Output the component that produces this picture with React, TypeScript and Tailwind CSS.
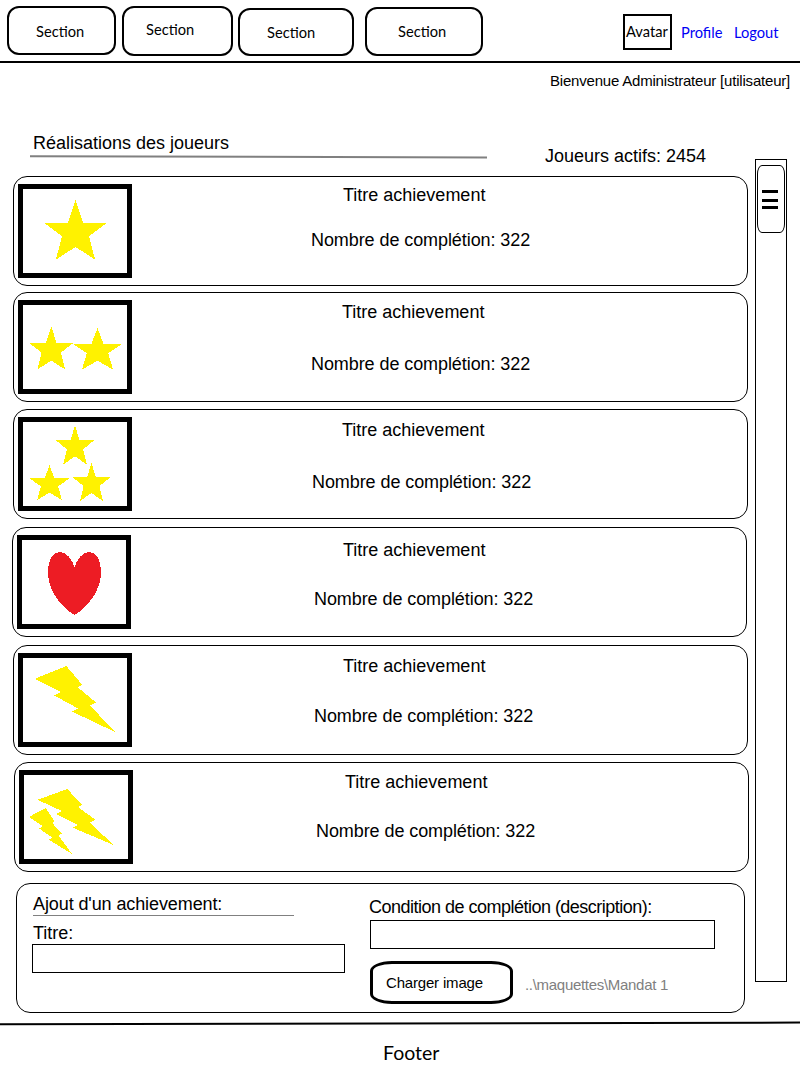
import type { ReactNode } from "react";

type Box = { x: number; y: number; w: number; h: number };

const STAR: [number, number][] = [
  [0.5, 0], [0.62, 0.38], [1, 0.38], [0.715, 0.61], [0.81, 1],
  [0.5, 0.79], [0.19, 1], [0.285, 0.61], [0, 0.38], [0.38, 0.38],
];

const BOLT: [number, number][] = [
  [0, 0.193], [0.391, 0], [0.588, 0.28], [0.538, 0.325], [0.763, 0.553], [0.688, 0.598],
  [1, 1], [0.463, 0.69], [0.538, 0.644], [0.238, 0.446], [0.325, 0.396],
];

function Shape({ points, x, y, w, h }: Box & { points: [number, number][] }) {
  return (
    <polygon
      fill="#fff200"
      points={points.map(([px, py]) => `${x + px * w},${y + py * h}`).join(" ")}
    />
  );
}

const Star = (b: Box) => <Shape points={STAR} {...b} />;
const Bolt = (b: Box) => <Shape points={BOLT} {...b} />;

type Achievement = {
  card: string;
  title: string;
  count: string;
  icon: ReactNode;
};

const achievements: Achievement[] = [
  {
    card: "ml-[13px]",
    title: "mt-[8px] ml-[211px]",
    count: "mt-[25px] ml-[179px]",
    icon: <Star x={21} y={11} w={63} h={59.5} />,
  },
  {
    card: "ml-[13px] mt-[6px]",
    title: "mt-[9px] ml-[210px]",
    count: "mt-[32px] ml-[179px]",
    icon: (
      <>
        <Star x={6} y={21.5} w={44.5} h={43} />
        <Star x={49.5} y={23} w={50} h={41.5} />
      </>
    ),
  },
  {
    card: "ml-[13px] mt-[7px]",
    title: "mt-[10px] ml-[210px]",
    count: "mt-[32px] ml-[180px]",
    icon: (
      <>
        <Star x={33} y={3.5} w={38} h={39} />
        <Star x={6.5} y={43} w={40} h={35} />
        <Star x={50} y={41} w={37} h={38} />
      </>
    ),
  },
  {
    card: "ml-[12px] mt-[8px]",
    title: "mt-[12px] ml-[212px]",
    count: "mt-[29px] ml-[183px]",
    icon: (
      <path
        fill="#ed1c24"
        d="M52.5 27C50 19 44 12 38 12C30 12 26 20 26 32C26 50 38 66 52.5 75C67 66 79 50 79 32C79 20 75 12 67 12C61 12 55 19 52.5 27Z"
      />
    ),
  },
  {
    card: "ml-[13px] mt-[8px]",
    title: "mt-[10px] ml-[211px]",
    count: "mt-[30px] ml-[182px]",
    icon: <Bolt x={12} y={8} w={80} h={66} />,
  },
  {
    card: "ml-[14px] mt-[7px]",
    title: "mt-[9px] ml-[212px]",
    count: "mt-[29px] ml-[183px]",
    icon: (
      <>
        <Bolt x={13.5} y={14} w={76} h={56} />
        <Bolt x={5} y={33} w={43} h={46} />
      </>
    ),
  },
];

const sections = [
  { box: "ml-[7px] mt-[6px] w-[109px] h-[49px] pl-[27px] pt-[14px]" },
  { box: "ml-[6px] mt-[6px] w-[111px] h-[50px] pl-[22px] pt-[12px]" },
  { box: "ml-[5px] mt-[8px] w-[116px] h-[48px] pl-[27px] pt-[13px]" },
  { box: "ml-[11px] mt-[7px] w-[118px] h-[49px] pl-[31px] pt-[13px]" },
];

function AchievementCard({ card, title, count, icon }: Achievement) {
  return (
    <article
      className={`flex h-[110px] w-[735px] shrink-0 rounded-[14px] border border-black ${card}`}
    >
      <div className="mt-[7px] ml-[4px] h-[94px] w-[114px] shrink-0 border-5 border-black">
        <svg width="104" height="84" viewBox="0 0 104 84" shapeRendering="crispEdges" className="block">
          {icon}
        </svg>
      </div>
      <div className="flex flex-col items-start">
        <h3 className={title}>Titre achievement</h3>
        <p className={`tracking-[-0.08px] ${count}`}>Nombre de complétion: 322</p>
      </div>
    </article>
  );
}

export default function App() {
  return (
    <div className="flex h-[1080px] w-[800px] flex-col overflow-hidden bg-white font-['Liberation_Sans',Arial,sans-serif] text-[18px] leading-[20px] whitespace-nowrap text-black">
      <header className="flex h-[63px] shrink-0 items-start border-b-2 border-black font-[Lato,sans-serif] text-[14.67px]">
        {sections.map((s, i) => (
          <button key={i} className={`flex shrink-0 items-start rounded-[12px] border-2 border-black ${s.box}`}>
            Section
          </button>
        ))}
        <div className="mt-[14px] ml-[140px] h-[36px] w-[49px] border-2 border-black pt-[6px] pl-px">
          Avatar
        </div>
        <a className="mt-[23px] ml-[9px] w-[53px] text-[#0000f5]">Profile</a>
        <a className="mt-[23px] text-[#0000f5]">Logout</a>
      </header>

      <p className="mt-[8px] pl-[550px] text-[15px] tracking-[-0.2px]">Bienvenue Administrateur [utilisateur]</p>

      <main className="flex h-[922px] shrink-0 items-start">
        <div className="flex w-[755px] flex-col">
          <div className="flex h-[85px] items-start">
            <div className="ml-[30px] flex w-[457px] flex-col pt-[42px]">
              <h2 className="pl-[3px]">Réalisations des joueurs</h2>
              <svg width="457" height="8" className="block">
                <line x1="0" y1="3.2" x2="457" y2="4.4" stroke="#808080" strokeWidth="2" />
              </svg>
            </div>
            <p className="mt-[55px] ml-[58px]">Joueurs actifs: 2454</p>
          </div>

          {achievements.map((a, i) => (
            <AchievementCard key={i} {...a} />
          ))}

          <form className="mt-[11px] ml-[16px] flex h-[130px] w-[729px] items-start rounded-[14px] border border-black">
            <div className="ml-[15px] flex w-[313px] flex-col pt-[10px]">
              <h2 className="ml-px h-[22px] w-[261px] border-b border-[#808080] tracking-[-0.1px]">Ajout d'un achievement:</h2>
              <label className="mt-[7px] ml-px">Titre:</label>
              <div className="mt-px h-[29px] border border-black" />
            </div>
            <div className="ml-[25px] flex w-[345px] flex-col pt-[13px]">
              <label className="-ml-px tracking-[-0.51px]">Condition de complétion (description):</label>
              <div className="mt-[3px] h-[29px] border border-black" />
              <div className="mt-[12px] flex items-start text-[15px]">
                <button
                  type="button"
                  className="flex h-[43px] w-[143px] shrink-0 items-start rounded-[22px_/_10px] border-3 border-black pt-[9px] pl-[13px] tracking-[-0.18px]"
                >
                  Charger image
                </button>
                <span className="mt-[14px] ml-[12px] tracking-[-0.3px] text-[#808080]">..\maquettes\Mandat 1</span>
              </div>
            </div>
          </form>
        </div>

        <aside className="mt-[68px] flex h-[823px] w-[32px] flex-col border border-black pt-[5px] pl-px">
          <div className="flex h-[68px] w-[28px] flex-col rounded-[5px_/_9px] border border-black pt-[24px] pl-[4px]">
            <div className="h-[3px] w-[16px] bg-black" />
            <div className="mt-[6px] h-[3px] w-[16px] bg-black" />
            <div className="mt-[4px] h-[3px] w-[16px] bg-black" />
          </div>
        </aside>
      </main>

      <footer className="flex h-[67px] shrink-0 flex-col">
        <svg width="800" height="20" className="block shrink-0">
          <line x1="0" y1="11.3" x2="800" y2="9.6" stroke="#000" strokeWidth="2" />
        </svg>
        <span className="mt-[10px] ml-[383px] font-[Lato,sans-serif] text-[19.5px]">Footer</span>
      </footer>
    </div>
  );
}
